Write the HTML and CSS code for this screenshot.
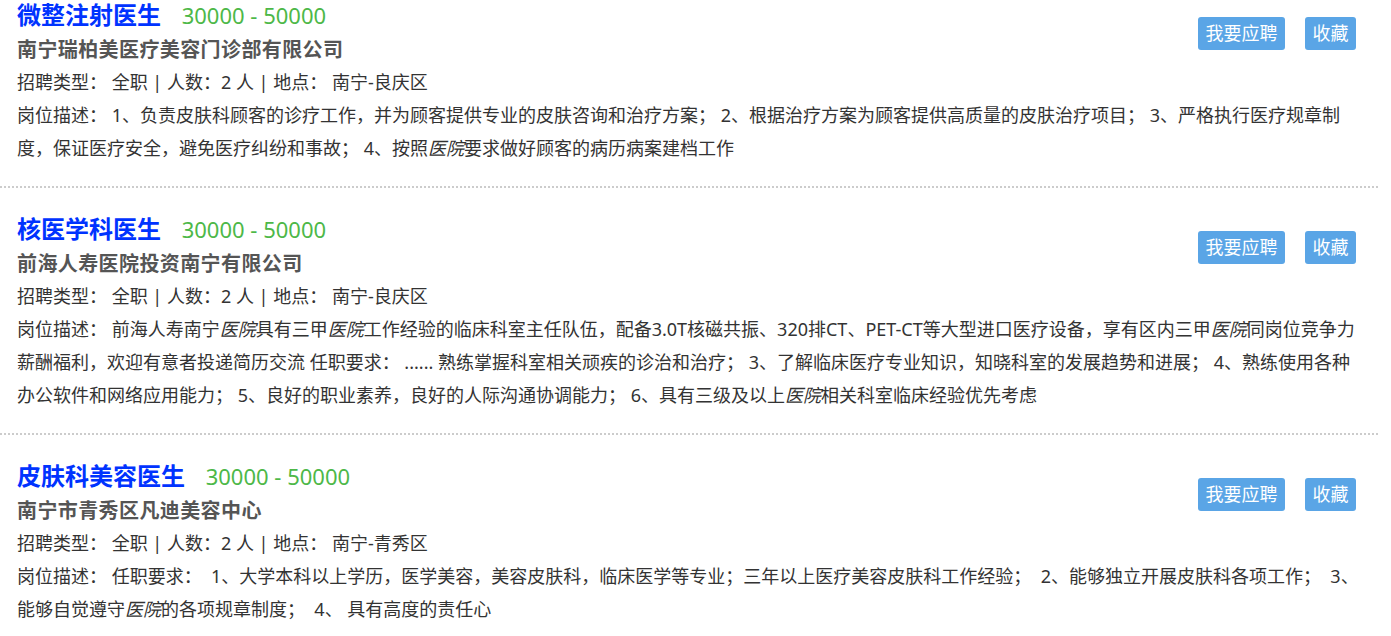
FILE: index.html
```html
<!DOCTYPE html>
<html lang="zh-CN">
<head>
    <meta charset="UTF-8">
    <meta name="viewport" content="width=device-width, initial-scale=1.0">
    <title>招聘信息</title>
    <link rel="stylesheet" href="styles.css">
</head>
<body>
    <div class="job-list">
        <div class="job">
            <div class="job-head">
                <div class="job-main">
                    <div class="job-title">
                        <a href="#" class="job-name">微整注射医生</a>
                        <span class="salary">30000 - 50000</span>
                    </div>
                    <div class="company">南宁瑞柏美医疗美容门诊部有限公司</div>
                </div>
                <div class="actions">
                    <button class="btn">我要应聘</button>
                    <button class="btn">收藏</button>
                </div>
            </div>
            <div class="info">招聘类型： 全职 | 人数：2 人 | 地点： 南宁-良庆区</div>
            <div class="desc">岗位描述： 1、负责皮肤科顾客的诊疗工作，并为顾客提供专业的皮肤咨询和治疗方案； 2、根据治疗方案为顾客提供高质量的皮肤治疗项目； 3、严格执行医疗规章制度，保证医疗安全，避免医疗纠纷和事故； 4、按照<em>医院</em>要求做好顾客的病历病案建档工作</div>
        </div>

        <div class="job">
            <div class="job-head">
                <div class="job-main">
                    <div class="job-title">
                        <a href="#" class="job-name">核医学科医生</a>
                        <span class="salary">30000 - 50000</span>
                    </div>
                    <div class="company">前海人寿医院投资南宁有限公司</div>
                </div>
                <div class="actions">
                    <button class="btn">我要应聘</button>
                    <button class="btn">收藏</button>
                </div>
            </div>
            <div class="info">招聘类型： 全职 | 人数：2 人 | 地点： 南宁-良庆区</div>
            <div class="desc">岗位描述： 前海人寿南宁<em>医院</em>具有三甲<em>医院</em>工作经验的临床科室主任队伍，配备3.0T核磁共振、320排CT、PET-CT等大型进口医疗设备，享有区内三甲<em>医院</em>同岗位竞争力薪酬福利，欢迎有意者投递简历交流 任职要求： ...... 熟练掌握科室相关顽疾的诊治和治疗； 3、了解临床医疗专业知识，知晓科室的发展趋势和进展； 4、熟练使用各种办公软件和网络应用能力； 5、良好的职业素养，良好的人际沟通协调能力； 6、具有三级及以上<em>医院</em>相关科室临床经验优先考虑</div>
        </div>

        <div class="job">
            <div class="job-head">
                <div class="job-main">
                    <div class="job-title">
                        <a href="#" class="job-name">皮肤科美容医生</a>
                        <span class="salary">30000 - 50000</span>
                    </div>
                    <div class="company">南宁市青秀区凡迪美容中心</div>
                </div>
                <div class="actions">
                    <button class="btn">我要应聘</button>
                    <button class="btn">收藏</button>
                </div>
            </div>
            <div class="info">招聘类型： 全职 | 人数：2 人 | 地点： 南宁-青秀区</div>
            <div class="desc">岗位描述： 任职要求：&nbsp; 1、大学本科以上学历，医学美容，美容皮肤科，临床医学等专业；三年以上医疗美容皮肤科工作经验；&nbsp; 2、能够独立开展皮肤科各项工作；&nbsp; 3、能够自觉遵守<em>医院</em>的各项规章制度；&nbsp; 4、 具有高度的责任心</div>
        </div>
    </div>
</body>
</html>
```

FILE: styles.css
```css
body {
    margin: 0;
    background-color: #fff;
    color: #333;
    font-family: "Noto Sans", "Noto Sans CJK SC", sans-serif;
    font-size: 18px;
    line-height: 33px;
}

.job-list {
    width: 1378px;
}

.job {
    padding: 26px 16px 21px 17px;
    border-bottom: 2px dotted #ccc;
}

.job:first-child {
    padding-top: 0;
}

.job-head {
    display: flex;
    justify-content: space-between;
    align-items: flex-start;
}

.job-title {
    height: 30px;
    line-height: 30px;
    white-space: nowrap;
}

.job-name {
    font-size: 24px;
    font-weight: bold;
    color: #0033ff;
    text-decoration: none;
}

.salary {
    margin-left: 16px;
    font-size: 22px;
    color: #4db848;
}

.company {
    margin-top: 3px;
    font-size: 20px;
    font-weight: bold;
    letter-spacing: 0.4px;
    color: #555;
}

.actions {
    display: flex;
    gap: 20px;
    margin-top: 17px;
    margin-right: 6px;
}

.btn {
    height: 33px;
    padding: 0 7.5px;
    background-color: #5aa5e6;
    color: #fff;
    border: none;
    border-radius: 3px;
    font-family: inherit;
    font-size: 18px;
    line-height: 33px;
    cursor: pointer;
}

.btn:hover {
    background-color: #3f8fd6;
}

.desc em {
    font-style: italic;
}
```
